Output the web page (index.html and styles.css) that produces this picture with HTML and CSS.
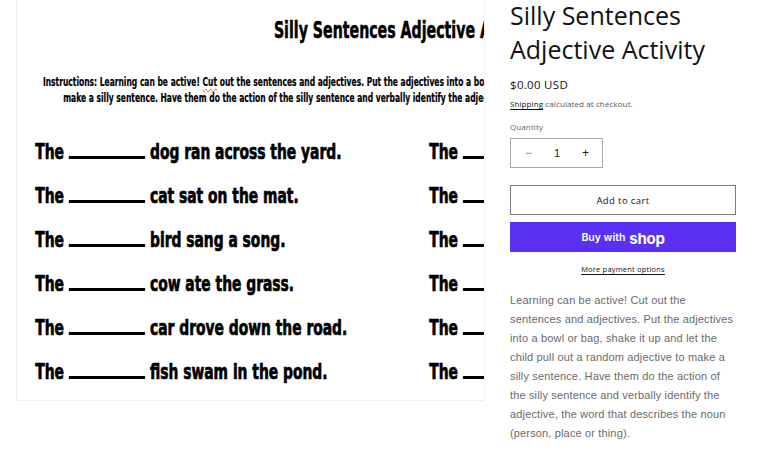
FILE: index.html
```html
<!DOCTYPE html>
<html lang="en">
<head>
<meta charset="utf-8">
<title>Silly Sentences Adjective Activity</title>
<link rel="stylesheet" href="styles.css">
</head>
<body>
<main class="product">
  <div class="media">
    <div class="sheet">
      <div class="sheet-title">Silly Sentences Adjective Activity</div>
      <div class="instr">
        <div class="instr-l1">Instructions: Learning can be active! <span class="spell">Cut</span> out the sentences and adjectives. Put the adjectives into a bowl</div>
        <div class="instr-l2">make a silly sentence. Have them do the action of the silly sentence and verbally identify the adjective.</div>
      </div>
      <div class="rows">
        <div class="row"><span class="the">The</span><span class="blank"></span><span>dog ran across the yard.</span></div>
        <div class="row"><span class="the">The</span><span class="blank"></span></div>
        <div class="row"><span class="the">The</span><span class="blank"></span><span>cat sat on the mat.</span></div>
        <div class="row"><span class="the">The</span><span class="blank"></span></div>
        <div class="row"><span class="the">The</span><span class="blank"></span><span>bird sang a song.</span></div>
        <div class="row"><span class="the">The</span><span class="blank"></span></div>
        <div class="row"><span class="the">The</span><span class="blank"></span><span>cow ate the grass.</span></div>
        <div class="row"><span class="the">The</span><span class="blank"></span></div>
        <div class="row"><span class="the">The</span><span class="blank"></span><span>car drove down the road.</span></div>
        <div class="row"><span class="the">The</span><span class="blank"></span></div>
        <div class="row"><span class="the">The</span><span class="blank"></span><span>fish swam in the pond.</span></div>
        <div class="row"><span class="the">The</span><span class="blank"></span></div>
      </div>
    </div>
  </div>

  <section class="info">
    <h1 class="title">Silly Sentences Adjective Activity</h1>
    <div class="price">$0.00 USD</div>
    <div class="shipping"><a href="#" class="link">Shipping</a> calculated at checkout.</div>
    <div class="qty-label">Quantity</div>
    <div class="qty">
      <span class="qty-btn">&minus;</span>
      <span class="qty-val">1</span>
      <span class="qty-btn">+</span>
    </div>
    <button class="btn-cart">Add to cart</button>
    <button class="btn-shop"><span class="buy">Buy with</span><span class="shop">shop</span></button>
    <div class="more"><a href="#" class="link">More payment options</a></div>
    <p class="desc">Learning can be active! Cut out the sentences and adjectives. Put the adjectives into a bowl or bag, shake it up and let the child pull out a random adjective to make a silly sentence. Have them do the action of the silly sentence and verbally identify the adjective, the word that describes the noun (person, place or thing).</p>
  </section>
</main>
</body>
</html>
```

FILE: styles.css
```css
* { box-sizing: border-box; }
html, body { margin: 0; padding: 0; background: #fff; }
body { font-family: "Open Sans", "Noto Sans", sans-serif; color: #121212; }

.product {
  display: flex;
  align-items: flex-start;
  padding-left: 16px;
}

/* ---------- media / worksheet (a picture, condensed) ---------- */
.media {
  width: 469px;
  height: 401px;
  border: 1px solid #f1f1f1;
  border-top: none;
  overflow: hidden;
  flex: none;
}
.sheet {
  width: 1200px;
  transform: scaleX(0.7);
  transform-origin: 0 0;
  font-family: "DejaVu Sans Condensed", "DejaVu Sans", sans-serif;
  font-weight: 700;
  color: #000;
  white-space: nowrap;
}
.sheet-title {
  font-size: 22.5px;
  line-height: 28px;
  padding: 16px 0 0 367px;
  -webkit-text-stroke: 0.5px #000;
}
.instr {
  font-size: 12px;
  line-height: 16px;
  margin-top: 30px;
  -webkit-text-stroke: 0.2px #000;
}
.instr-l1 { padding-left: 37px; }
.instr-l2 { padding-left: 66px; }
.spell {
  text-decoration: underline wavy #e03030;
  text-decoration-thickness: 1px;
  text-underline-offset: 2px;
}
.rows {
  display: grid;
  grid-template-columns: 563px 563px;
  padding-left: 26px;
  margin-top: 34px;
  row-gap: 20px;
}
.row {
  font-size: 22px;
  line-height: 24px;
  display: flex;
  align-items: baseline;
  -webkit-text-stroke: 0.7px #000;
}
.blank {
  display: inline-block;
  width: 109px;
  height: 3px;
  border-bottom: 3px solid #000;
  margin: 0 7px;
}

/* ---------- product info ---------- */
.info {
  width: 226px;
  margin-left: 25px;
  flex: none;
}
.title {
  font-family: "Open Sans", sans-serif;
  font-weight: 400;
  font-size: 25px;
  line-height: 34px;
  margin: -2px 0 0;
  color: #121212;
}
.price {
  font-size: 11.5px;
  line-height: 18px;
  letter-spacing: 0.3px;
  margin-top: 10px;
  color: #121212;
}
.shipping {
  font-size: 8px;
  line-height: 14px;
  letter-spacing: 0.1px;
  margin-top: 3px;
  color: #555;
}
.link { color: #121212; text-decoration: underline; text-underline-offset: 2px; }
.qty-label {
  font-size: 8px;
  line-height: 13px;
  letter-spacing: 0.1px;
  margin-top: 9px;
  color: #666;
}
.qty {
  margin-top: 5px;
  width: 93px;
  height: 30px;
  border: 1px solid #a9a9a9;
  display: flex;
  align-items: center;
  justify-content: space-between;
  padding: 0 13px 0 14px;
  font-family: "Liberation Sans", Arial, sans-serif;
  font-size: 11px;
  color: #333;
}
.qty-btn { color: #888; font-size: 12px; line-height: 1; }
.qty-btn:last-child { color: #222; }
.qty-val { color: #222; line-height: 1; }

.btn-cart, .btn-shop {
  display: flex;
  align-items: center;
  justify-content: center;
  width: 226px;
  height: 30px;
  font-family: inherit;
  cursor: pointer;
  padding: 0;
}
.btn-cart {
  margin-top: 17px;
  background: #fff;
  border: 1px solid #7b7b7b;
  font-size: 9.5px;
  letter-spacing: 0.4px;
  color: #121212;
}
.btn-shop {
  margin-top: 7px;
  background: #5a31f4;
  border: none;
  color: #fff;
  gap: 4px;
}
.buy { font-family: "Inter", sans-serif; font-weight: 600; font-size: 10.5px; }
.shop { font-family: "Inter", sans-serif; font-weight: 700; font-size: 15px; letter-spacing: -0.3px; line-height: 1; position: relative; top: 1px; }

.more {
  text-align: center;
  font-size: 7.5px;
  line-height: 12px;
  letter-spacing: 0.2px;
  margin-top: 11px;
}
.desc {
  font-family: "Liberation Sans", Arial, sans-serif;
  font-size: 11px;
  line-height: 19px;
  letter-spacing: 0.15px;
  color: #6a6a6a;
  margin: 16px 0 0;
}
```
